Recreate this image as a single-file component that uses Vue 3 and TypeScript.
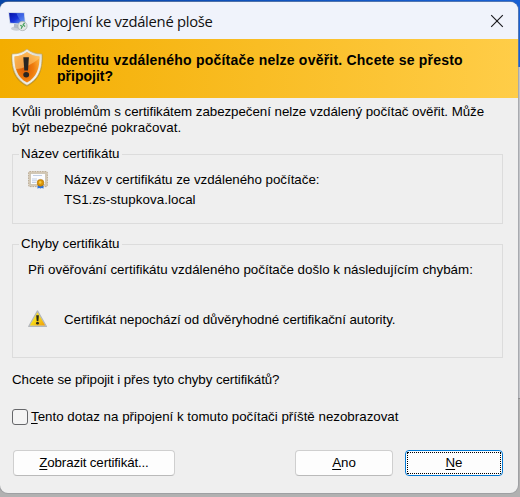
<script setup lang="ts">
import { ref } from 'vue'

const skipPrompt = ref<boolean>(false)
</script>

<template>
  <div class="desktop">
    <div class="backdrop"><div class="backdrop-top"></div><div class="backdrop-mid"></div><div class="backdrop-low"></div></div>
    <section class="dialog" role="dialog" aria-labelledby="title">
      <header class="titlebar">
        <svg class="app-icon" width="20" height="21" viewBox="0 0 20 21">
          <defs>
            <linearGradient id="screen" x1="0" y1="0" x2="1" y2="1">
              <stop offset="0" stop-color="#0714a8" />
              <stop offset=".5" stop-color="#1833d8" />
              <stop offset="1" stop-color="#7fb6f8" />
            </linearGradient>
          </defs>
          <ellipse cx="8.500" cy="17.500" rx="5.500" ry="2.200" fill="#c9ced6" />
          <path d="M6 12.500l4 1v4l-4-1z" fill="#b3bac6" />
          <path d="M.3 1.200l16.300.3 1 12.300L1.600 12.500z" fill="#c6d1e4" />
          <path d="M1.100 2l14.700.2 1 10.600L2.300 11.700z" fill="url(#screen)" />
          <path d="M8.500 2.200h7.200l.8 8.700c-3.800-.3-6-3.400-8-8.700z" fill="#5e8df0" opacity=".55" />
          <circle cx="14.500" cy="15" r="4.600" fill="#e3e7e5" stroke="#a6afb0" stroke-width=".8" />
          <path d="M12.300 14.200l2 1.300-1.200 2.300M16.600 11.900l-1.500 2 2 1.500" fill="none" stroke="#45a05e" stroke-width="1.200" />
        </svg>
        <h1 id="title">Připojení ke vzdálené ploše</h1>
        <button class="close" aria-label="Zavřít">
          <svg width="14" height="14" viewBox="0 0 14 14"><path d="M1.200 1.200l11.600 11.600M12.800 1.200L1.200 12.800" stroke="#1b1b1f" stroke-width="1.150" /></svg>
        </button>
      </header>

      <div class="banner">
        <svg class="shield" width="34" height="40" viewBox="0 0 34 40">
          <defs>
            <linearGradient id="rim" x1="0" y1="0" x2="1" y2="1">
              <stop offset="0" stop-color="#fffdf2" />
              <stop offset=".5" stop-color="#dfddd2" />
              <stop offset="1" stop-color="#fff" />
            </linearGradient>
            <radialGradient id="orange" cx=".4" cy=".55" r=".65">
              <stop offset="0" stop-color="#d95c08" />
              <stop offset=".55" stop-color="#ee7b0d" />
              <stop offset="1" stop-color="#ffae38" />
            </radialGradient>
          </defs>
          <path d="M17 1.500C13 5 7.500 6.500 1.500 6.500C.8 20 3.500 32 17 38.500C30.500 32 33.200 20 32.500 6.500C26.500 6.500 21 5 17 1.500Z" fill="#9c7a22" opacity=".55" />
          <path d="M17 1C13 4.500 8 6 2 6C1.500 19 4 30.800 17 37.300C30 30.800 32.500 19 32 6C26 6 21 4.500 17 1Z" fill="url(#rim)" stroke="#c0a867" stroke-width=".7" />
          <path d="M17 4C13.500 6.800 9.500 8.100 4.500 8.400C4.300 19.500 7 29 17 34.600C27 29 29.700 19.500 29.500 8.400C24.500 8.100 20.500 6.800 17 4Z" fill="url(#orange)" />
          <path d="M17 4C13.500 6.800 9.500 8.100 4.500 8.400C4.400 13 4.800 17.300 6 21C13 21 23 16 29.500 10V8.400C24.500 8.100 20.500 6.800 17 4Z" fill="#ffd07a" opacity=".55" />
          <path d="M13.300 9.300h5.600l-.9 13.200h-3.700z" fill="#282522" />
          <ellipse cx="16.200" cy="26.800" rx="2.900" ry="2.700" fill="#282522" />
        </svg>
        <h2><span class="b1">Identitu vzdáleného počítače nelze ověřit. Chcete se přesto</span><br /><span class="b2">připojit?</span></h2>
      </div>

      <main class="content">
        <p class="intro"><span class="i1">Kvůli problémům s certifikátem zabezpečení nelze vzdálený počítač ověřit. Může</span><br /><span class="i2">být nebezpečné pokračovat.</span></p>

        <fieldset class="group name-group">
          <legend>Název certifikátu</legend>
          <div class="row">
            <svg class="cert" width="20" height="18" viewBox="0 0 20 18">
              <rect x=".6" y=".6" width="18.800" height="15" rx="1" fill="#d5c9b5" stroke="#b9aa94" stroke-width="1" stroke-dasharray="1.500 1" />
              <rect x="2.500" y="2.500" width="15" height="11" fill="#fbfcff" stroke="#c5bda9" stroke-width=".7" />
              <path d="M5 4.500h9M4 8h5M4 9.800h5M4 11.500h4" stroke="#a9bcd8" stroke-width=".7" />
              <path d="M10.300 12l-1 5.500 2-.6 1.200.7 1.200-.7 2 .6-1-5.500z" fill="#2b72df" />
              <circle cx="12.500" cy="11.800" r="3.400" fill="#d99508" stroke="#ad6f06" stroke-width=".6" />
              <circle cx="12.200" cy="11.400" r="1.300" fill="#f7c83c" />
            </svg>
            <div class="lines"><p class="n1">Název v certifikátu ze vzdáleného počítače:</p><p class="n2">TS1.zs-stupkova.local</p></div>
          </div>
        </fieldset>

        <fieldset class="group error-group">
          <legend>Chyby certifikátu</legend>
          <p class="e1">Při ověřování certifikátu vzdáleného počítače došlo k následujícím chybám:</p>
          <div class="row error">
            <svg class="warning" width="20" height="18" viewBox="0 0 20 18">
              <defs>
                <linearGradient id="amber" x1="0" y1="0" x2="1" y2="1">
                  <stop offset="0" stop-color="#efd35a" />
                  <stop offset=".45" stop-color="#f8dc18" />
                  <stop offset="1" stop-color="#ef9b0a" />
                </linearGradient>
              </defs>
              <path d="M9.500.9L.7 16.500h17.800z" fill="#c5c8ca" stroke="#b3b7ba" stroke-width="1.200" stroke-linejoin="round" />
              <path d="M9.500 2.200L1.900 15.500H17.200z" fill="url(#amber)" />
              <path d="M8.200 5.300h2.700l-.5 5.700H8.700z" fill="#292a1d" />
              <circle cx="9.500" cy="13.200" r="1.400" fill="#292a1d" />
            </svg>
            <p class="e2">Certifikát nepochází od důvěryhodné certifikační autority.</p>
          </div>
        </fieldset>

        <p class="question">Chcete se připojit i přes tyto chyby certifikátů?</p>
        <label class="check"><input v-model="skipPrompt" type="checkbox" /><span><u>T</u>ento dotaz na připojení k tomuto počítači příště nezobrazovat</span></label>
        <footer class="actions">
          <button class="btn view"><span><u>Z</u>obrazit certifikát...</span></button>
          <button class="btn yes"><span><u>A</u>no</span></button>
          <button class="btn no"><span><u>N</u>e</span></button>
        </footer>
      </main>
    </section>
  </div>
</template>

<style>
body { margin: 0; overflow: hidden; }
</style>

<style scoped>
* { box-sizing: border-box; }
.desktop { position: relative; width: 520px; height: 497px; overflow: hidden; background: #b1b1b1; font: 13.333px/16px "Liberation Sans", Arial, sans-serif; color: #000; }
.backdrop { position: absolute; inset: 0; display: flex; flex-direction: column; }
.backdrop-top { height: 67px; background: linear-gradient(90deg, #0645a7, #1860d4); }
.backdrop-mid { height: 331px; background: #c3c5c9; }
.backdrop-low { flex: 1; background: #b1b1b1; border-top: 1px solid #8e8e8e; }
.dialog { position: relative; width: 518px; height: 491px; margin-top: 2px; overflow: hidden; border-radius: 8px; background: #efefef; box-shadow: 0 0 0 1px #8d909680; }
.titlebar { display: flex; align-items: center; height: 37px; padding: 0 14px 0 8px; background: #f0f3fb; }
.app-icon { margin-top: 1px; }
h1 { margin: 0 0 0 5px; font: 400 14.8px/20px "Open Sans", "Noto Sans", sans-serif; letter-spacing: -.28px; white-space: nowrap; color: #111; }
.close { display: flex; margin-left: auto; padding: 0; border: 0; background: none; }
.banner { display: flex; height: 59px; padding: 9px 10px 0; background: linear-gradient(90deg, #f3ad00, #ffcd48); }
h2 { margin: 4px 0 0 13px; font: 700 14px/16px "Liberation Sans", Arial, sans-serif; white-space: nowrap; }
.b1 { letter-spacing: .22px; }
p { margin: 0; white-space: nowrap; }
.content { padding: 6px 15px 0 12px; }
.i1 { letter-spacing: -.045px; }
.i2 { letter-spacing: .1px; }
.group { min-width: 0; height: 78px; margin: 0; padding: 0; border: 1px solid #dcdcdc; }
.name-group { margin-top: 10px; }
.error-group { height: 122px; margin-top: 12px; }
legend { height: 16px; margin-left: 6px; padding: 0 2px; white-space: nowrap; }
.row { display: flex; }
.name-group .row { padding: 9px 0 0 15px; }
.lines { display: grid; gap: 4px; margin: 1px 0 0 16px; }
.n1 { letter-spacing: -.02px; }
.n2 { letter-spacing: .06px; }
.e1 { padding: 10px 0 0 15px; letter-spacing: .015px; }
.error { padding: 32px 0 0 15px; }
.e2 { margin: 2px 0 0 16px; letter-spacing: -.055px; }
.question { margin-top: 14px; letter-spacing: -.075px; }
.check { display: flex; align-items: center; gap: 3px; margin-top: 21px; white-space: nowrap; }
.check input { appearance: none; width: 16px; height: 16px; margin: 0; border: 1px solid #66676a; border-radius: 3px; background: #f4f4f4; }
.actions { display: flex; margin-top: 25px; padding-left: 1px; }
.btn { width: 98px; height: 26px; padding: 0; border: 1px solid #cfcfcf; border-bottom-color: #bababa; border-radius: 4px; background: #fdfdfd; color: #000; font: inherit; }
.view { width: 162px; letter-spacing: -.15px; }
.yes { margin-left: auto; }
.no { margin-left: 12px; padding: 0; border-color: #0078d4; }
.no span { display: block; height: 22px; margin: 1px; border: 1px dotted #000; line-height: 20px; }
u { text-decoration: underline; text-underline-offset: 2px; text-decoration-thickness: 1px; text-decoration-skip-ink: none; }
</style>
